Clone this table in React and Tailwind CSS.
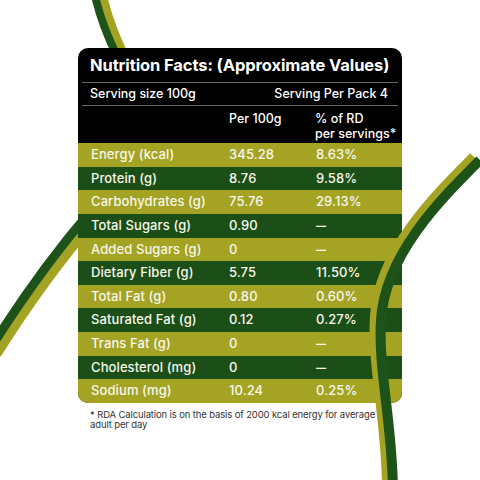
import React from "react";

const OLIVE = "#a5a323";
const DARK = "#1d5219";

const rows = [
  ["Energy (kcal)", "345.28", "8.63%"],
  ["Protein (g)", "8.76", "9.58%"],
  ["Carbohydrates (g)", "75.76", "29.13%"],
  ["Total Sugars (g)", "0.90", "—"],
  ["Added Sugars (g)", "0", "—"],
  ["Dietary Fiber (g)", "5.75", "11.50%"],
  ["Total Fat (g)", "0.80", "0.60%"],
  ["Saturated Fat (g)", "0.12", "0.27%"],
  ["Trans Fat (g)", "0", "—"],
  ["Cholesterol (mg)", "0", "—"],
  ["Sodium (mg)", "10.24", "0.25%"],
];

export default function App() {
  return (
    <div
      className="relative w-[480px] h-[480px] bg-white overflow-hidden"
      style={{ fontFamily: "Inter, 'Open Sans', sans-serif" }}
    >
      <svg className="absolute inset-0" width="480" height="480" viewBox="0 0 480 480">
        <path d="M 95 -4 Q 102 25 116 54" fill="none" stroke={OLIVE} strokeWidth="8" transform="translate(8,0)" />
        <path d="M 95 -4 Q 102 25 116 54" fill="none" stroke={DARK} strokeWidth="8" />
        <path d="M 90 212 Q 40 270 -8 346" fill="none" stroke={OLIVE} strokeWidth="9" transform="translate(5,8)" />
        <path d="M 90 212 Q 40 270 -8 346" fill="none" stroke={DARK} strokeWidth="9" />
      </svg>

      <div className="relative ml-[78px] mt-[48px] w-[324px] rounded-[10px] overflow-hidden bg-black text-[#f7f7ec]">
        <div className="h-[34px] flex items-center pl-3 text-[16.5px] font-bold text-white whitespace-nowrap tracking-[-0.1px]">
          Nutrition Facts: (Approximate Values)
        </div>
        <div className="mx-1 h-px bg-[#6a6a6a]" />
        <div className="h-[22px] flex items-center justify-between pl-3 pr-[14px] text-[12.5px] font-medium text-white">
          <span>Serving size 100g</span>
          <span>Serving Per Pack 4</span>
        </div>
        <div className="mx-1 h-px bg-[#6a6a6a]" />
        <div className="h-[37px] grid grid-cols-[151px_86px_1fr] pt-[5px] text-[12.5px] font-medium text-white leading-[15px]">
          <div />
          <div>Per 100g</div>
          <div>
            % of RD
            <br />
            per servings*
          </div>
        </div>
        {rows.map((r, i) => (
          <div
            key={r[0]}
            className={
              "h-[23.64px] grid grid-cols-[151px_86px_1fr] items-center text-[13px] font-medium tracking-[0.1px] " +
              (i % 2 === 0 ? "bg-[#a5a323]" : "bg-[#1b4f17]")
            }
          >
            <div className="pl-[13px]">{r[0]}</div>
            <div>{r[1]}</div>
            {r[2] === "—" ? (
              <div className="pl-[1px] text-[10px] font-bold">{r[2]}</div>
            ) : (
              <div className="pl-[1px]">{r[2]}</div>
            )}
          </div>
        ))}
      </div>

      <div className="ml-[90px] mt-[7px] w-[292px] text-[9.5px] leading-[10.5px] tracking-[-0.13px] text-[#333333]">
        * RDA Calculation is on the basis of 2000 kcal energy for average adult per day
      </div>

      <svg className="absolute inset-0 pointer-events-none" width="480" height="480" viewBox="0 0 480 480">
        <path
          d="M 480 160 C 440 200, 385 255, 381 320 C 378 370, 392 420, 393 490"
          fill="none"
          stroke={OLIVE}
          strokeWidth="8"
          transform="translate(-7,-4)"
        />
        <path
          d="M 480 160 C 440 200, 385 255, 381 320 C 378 370, 392 420, 393 490"
          fill="none"
          stroke={DARK}
          strokeWidth="10"
        />
      </svg>
    </div>
  );
}
